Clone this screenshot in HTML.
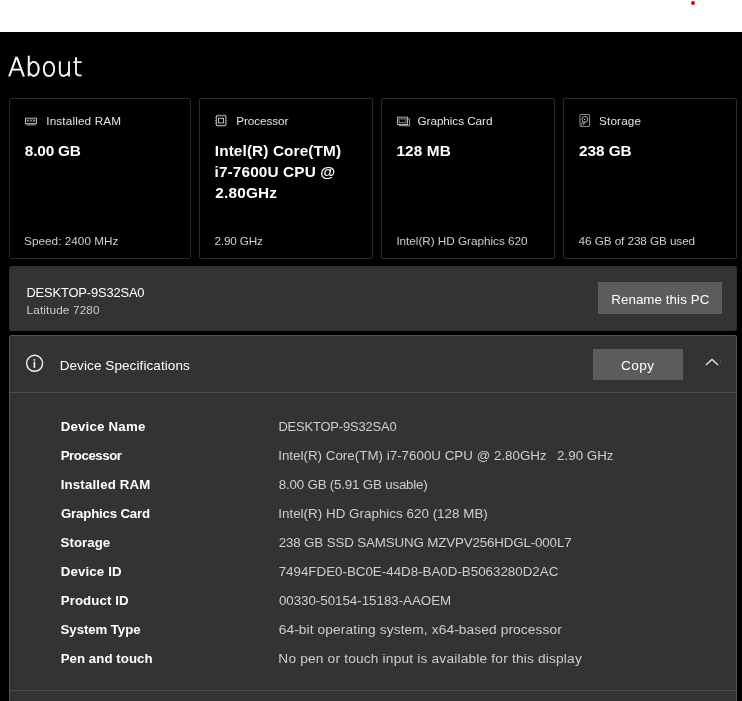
<!DOCTYPE html>
<html lang="en">
<head>
<meta charset="utf-8">
<title>About</title>
<style>
html,body{margin:0;padding:0;}
body{width:742px;height:701px;overflow:hidden;background:#000;position:relative;font-family:"Liberation Sans",Arial,sans-serif;}
.abs{position:absolute;box-sizing:border-box;}
.t{position:absolute;margin:0;padding:0;white-space:pre;line-height:20px;font-weight:400;}
.topbar{left:0;top:0;width:742px;height:32px;background:#fff;}
.dot{left:691px;top:0.5px;width:4.2px;height:4.2px;border-radius:50%;background:#e40000;}
.card{top:98px;height:161px;border:1px solid #2b2b2b;border-radius:2px;background:#000;}
.panel{background:#333;}
.btn{background:#5c5c5c;}
.line{height:1px;background:#4d4d4d;}
svg{position:absolute;overflow:visible;}
.title{position:absolute;margin:0;left:8.3px;top:51.4px;font-family:"DejaVu Sans","Liberation Sans",sans-serif;font-weight:200;font-size:26.1px;line-height:32px;color:#fff;transform:scaleX(0.964) rotate(0.1deg);transform-origin:0 0;-webkit-text-stroke:0.7px #fff;white-space:pre;}
.txt{position:absolute;left:0;top:0;width:742px;height:701px;will-change:transform;}
</style>
</head>
<body>
<div class="abs topbar"></div>
<div class="abs dot"></div>

<div class="abs card" style="left:9px;width:182px;"></div>
<div class="abs card" style="left:199px;width:174px;"></div>
<div class="abs card" style="left:381px;width:174px;"></div>
<div class="abs card" style="left:563px;width:174px;"></div>

<div class="abs panel" style="left:9px;top:266px;width:728px;height:65px;border:1px solid #2e2e2e;border-radius:2px;"></div>
<div class="abs btn" style="left:598px;top:282px;width:124px;height:32px;"></div>

<div class="abs panel" style="left:9px;top:335px;width:728px;height:380px;border:1px solid #505050;border-radius:2px;"></div>
<div class="abs line" style="left:10px;top:392px;width:726px;"></div>
<div class="abs line" style="left:10px;top:690px;width:726px;"></div>
<div class="abs btn" style="left:593px;top:349px;width:90px;height:31px;"></div>

<svg width="742" height="701" viewBox="0 0 742 701" style="left:0;top:0;" fill="none">
 <!-- RAM icon -->
 <rect x="25.5" y="118.2" width="11" height="5.4" stroke="#b4b4b4" stroke-width="1"/>
 <rect x="26.6" y="119.6" width="8.8" height="1.9" fill="#8e8e8e"/>
 <rect x="29" y="119.9" width="1.1" height="1.3" fill="#000"/>
 <rect x="31.9" y="119.9" width="1.1" height="1.3" fill="#000"/>
 <rect x="26.4" y="124.3" width="9.2" height="1.2" fill="#8c8c8c"/>
 <!-- CPU icon -->
 <rect x="216.4" y="115.8" width="9.4" height="9.6" stroke="#b4b4b4" stroke-width="1"/>
 <rect x="218.5" y="118.3" width="5" height="4.6" stroke="#bcbcbc" stroke-width="1"/>
 <g stroke="#909090" stroke-width="1.1">
  <path d="M218.3 114.5v0.9M221.1 114.5v0.9M223.9 114.5v0.9M218.3 125.8v0.9M221.1 125.8v0.9M223.9 125.8v0.9"/>
  <path d="M215 117.8h0.9M215 120.6h0.9M215 123.4h0.9M226.2 117.8h0.9M226.2 120.6h0.9M226.2 123.4h0.9"/>
 </g>
 <!-- GPU icon -->
 <rect x="397.5" y="117.2" width="10" height="7.3" stroke="#b0b0b0" stroke-width="1"/>
 <rect x="399.1" y="118.9" width="6.9" height="3.8" stroke="#8c8c8c" stroke-width="1"/>
 <path d="M408 118.8h1.6v7.1" stroke="#9c9c9c" stroke-width="1"/>
 <path d="M399 125.6h10.6" stroke="#8c8c8c" stroke-width="1.3"/>
 <!-- HDD icon -->
 <rect x="580" y="114.5" width="9.6" height="12" rx="1.2" stroke="#868686" stroke-width="1.1"/>
 <circle cx="584.85" cy="119.3" r="2.9" stroke="#a8a8a8" stroke-width="1"/>
 <circle cx="584.6" cy="119.4" r="0.7" fill="#d0d0d0"/>
 <path d="M587 121.2L583.4 125.4L581.2 125.4L581.2 122.6L583 121.6Z" fill="#7c7c7c"/>
 <rect x="582" y="122.6" width="1" height="1" fill="#111"/>
 <rect x="582.4" y="124.2" width="1.1" height="1" fill="#111"/>
 <!-- info icon -->
 <circle cx="34.6" cy="363.3" r="8" stroke="#f4f4f4" stroke-width="1.4"/>
 <rect x="33.6" y="361.7" width="1.6" height="6.2" fill="#f4f4f4"/>
 <rect x="33.6" y="359.1" width="1.6" height="1.6" fill="#f4f4f4"/>
 <!-- chevron -->
 <path d="M705.9 364.9L712 359.4L718.1 364.9" stroke="#e8e8e8" stroke-width="1.3"/>
 <rect x="720" y="361" width="1" height="1" fill="#777"/>
</svg>

<div class="txt">
<h1 class="title">About</h1>
<span class="t" style="left:46.3px;top:111.00px;font-size:11.75px;letter-spacing:0.131px;color:#e4e4e4;">Installed RAM</span>
<span class="t" style="left:24.8px;top:141.02px;font-size:15.35px;letter-spacing:-0.167px;color:#ffffff;font-weight:700;">8.00 GB</span>
<span class="t" style="left:24.1px;top:231.00px;font-size:11.75px;letter-spacing:0.019px;color:#cfcfcf;">Speed: 2400 MHz</span>
<span class="t" style="left:236.3px;top:111.00px;font-size:11.75px;letter-spacing:-0.093px;color:#e4e4e4;">Processor</span>
<span class="t" style="left:214.8px;top:141.02px;font-size:15.35px;letter-spacing:0.110px;color:#ffffff;font-weight:700;">Intel(R) Core(TM)</span>
<span class="t" style="left:214.5px;top:162.02px;font-size:15.35px;letter-spacing:0.134px;color:#ffffff;font-weight:700;">i7-7600U CPU @</span>
<span class="t" style="left:215.2px;top:183.02px;font-size:15.35px;letter-spacing:0.208px;color:#ffffff;font-weight:700;">2.80GHz</span>
<span class="t" style="left:214.4px;top:231.00px;font-size:11.75px;letter-spacing:-0.149px;color:#cfcfcf;">2.90 GHz</span>
<span class="t" style="left:417.5px;top:111.00px;font-size:11.75px;letter-spacing:-0.066px;color:#e4e4e4;">Graphics Card</span>
<span class="t" style="left:396.4px;top:141.02px;font-size:15.35px;letter-spacing:0.149px;color:#ffffff;font-weight:700;">128 MB</span>
<span class="t" style="left:396.4px;top:231.00px;font-size:11.75px;letter-spacing:-0.034px;color:#cfcfcf;">Intel(R) HD Graphics 620</span>
<span class="t" style="left:599.0px;top:111.00px;font-size:11.75px;letter-spacing:0.144px;color:#e4e4e4;">Storage</span>
<span class="t" style="left:578.9px;top:141.02px;font-size:15.35px;letter-spacing:-0.016px;color:#ffffff;font-weight:700;">238 GB</span>
<span class="t" style="left:578.6px;top:231.00px;font-size:11.75px;letter-spacing:-0.089px;color:#cfcfcf;">46 GB of 238 GB used</span>
<span class="t" style="left:26.4px;top:283.01px;font-size:12.9px;letter-spacing:-0.142px;color:#ffffff;">DESKTOP-9S32SA0</span>
<span class="t" style="left:26.5px;top:300.01px;font-size:11.75px;letter-spacing:0.154px;color:#cccccc;">Latitude 7280</span>
<span class="t" style="left:611.2px;top:290.01px;font-size:13.35px;letter-spacing:0.071px;color:#ffffff;">Rename this PC</span>
<span class="t" style="left:59.7px;top:356.02px;font-size:13.5px;letter-spacing:0.090px;color:#ffffff;">Device Specifications</span>
<span class="t" style="left:621.0px;top:356.00px;font-size:13.6px;letter-spacing:0.432px;color:#ffffff;">Copy</span>
<span class="t" style="left:60.7px;top:417.00px;font-size:13.25px;letter-spacing:0.207px;color:#ffffff;font-weight:700;">Device Name</span>
<span class="t" style="left:60.7px;top:446.00px;font-size:13.25px;letter-spacing:-0.434px;color:#ffffff;font-weight:700;">Processor</span>
<span class="t" style="left:60.7px;top:475.00px;font-size:13.25px;letter-spacing:0.167px;color:#ffffff;font-weight:700;">Installed RAM</span>
<span class="t" style="left:61.0px;top:504.00px;font-size:13.25px;letter-spacing:-0.182px;color:#ffffff;font-weight:700;">Graphics Card</span>
<span class="t" style="left:60.6px;top:533.00px;font-size:13.25px;letter-spacing:0.048px;color:#ffffff;font-weight:700;">Storage</span>
<span class="t" style="left:60.7px;top:562.00px;font-size:13.25px;letter-spacing:0.162px;color:#ffffff;font-weight:700;">Device ID</span>
<span class="t" style="left:60.7px;top:591.00px;font-size:13.25px;letter-spacing:0.109px;color:#ffffff;font-weight:700;">Product ID</span>
<span class="t" style="left:60.6px;top:620.00px;font-size:13.25px;letter-spacing:-0.083px;color:#ffffff;font-weight:700;">System Type</span>
<span class="t" style="left:60.7px;top:649.00px;font-size:13.25px;letter-spacing:0.049px;color:#ffffff;font-weight:700;">Pen and touch</span>
<span class="t" style="left:278.4px;top:417.01px;font-size:12.9px;letter-spacing:-0.132px;color:#cecece;">DESKTOP-9S32SA0</span>
<span class="t" style="left:278.2px;top:446.01px;font-size:13.35px;letter-spacing:0.016px;color:#cecece;">Intel(R) Core(TM) i7-7600U CPU @ 2.80GHz</span>
<span class="t" style="left:278.8px;top:475.01px;font-size:13.35px;letter-spacing:-0.199px;color:#cecece;">8.00 GB (5.91 GB usable)</span>
<span class="t" style="left:278.2px;top:504.01px;font-size:13.35px;letter-spacing:0.038px;color:#cecece;">Intel(R) HD Graphics 620 (128 MB)</span>
<span class="t" style="left:278.7px;top:533.01px;font-size:13.35px;letter-spacing:-0.145px;color:#cecece;">238 GB SSD SAMSUNG MZVPV256HDGL-000L7</span>
<span class="t" style="left:278.7px;top:562.01px;font-size:13.35px;letter-spacing:-0.001px;color:#cecece;">7494FDE0-BC0E-44D8-BA0D-B5063280D2AC</span>
<span class="t" style="left:278.9px;top:591.01px;font-size:13.35px;letter-spacing:-0.025px;color:#cecece;">00330-50154-15183-AAOEM</span>
<span class="t" style="left:278.7px;top:620.00px;font-size:13.7px;letter-spacing:0.125px;color:#cecece;">64-bit operating system, x64-based processor</span>
<span class="t" style="left:278.3px;top:649.00px;font-size:13.7px;letter-spacing:0.195px;color:#cecece;">No pen or touch input is available for this display</span>
<span class="t" style="left:557.1px;top:446.01px;font-size:13.35px;letter-spacing:0.008px;color:#cecece;">2.90 GHz</span>
</div>
</body>
</html>
